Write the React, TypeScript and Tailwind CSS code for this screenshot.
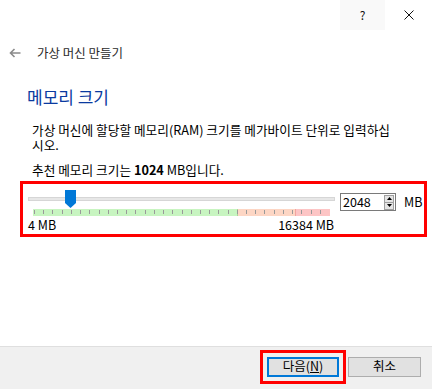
import React from "react";

const font = { fontFamily: '"Noto Sans CJK KR", "Noto Sans", sans-serif' };

function Thumb() {
  return (
    <svg width="11" height="18" viewBox="0 0 11 18" className="absolute left-[37px] top-[1px]">
      <polygon points="0,0 11,0 11,13 5.5,18 0,13" fill="#0078d7" />
    </svg>
  );
}

function TickBar() {
  const ticks = Array.from({ length: 32 });
  return (
    <div className="relative ml-[5px] flex h-[7px] w-[297px]">
      <div className="h-full w-[205px] border-r border-[#a9d59a] bg-[#c8f5c1]" />
      <div className="h-full w-[58px] border-r border-[#f2a5a0] bg-[#fdd6c4]" />
      <div className="h-full flex-1 bg-[#fdc5c5]" />
      <div className="absolute inset-0 flex justify-between pl-[1px] pr-[9px]">
        {ticks.map((_, i) => (
          <span key={i} className="mt-[1px] h-[4px] w-[1px] bg-[#9a9a9a]" />
        ))}
      </div>
    </div>
  );
}

function SpinBox() {
  return (
    <div className="ml-[5px] mt-[9px] flex h-[18px] w-[56px] items-center border border-[#7a7a7a] bg-white">
      <span className="flex-1 pl-[2px] text-[12.5px] leading-[16px] text-black">2048</span>
      <div className="mr-[1px] flex h-[15px] w-[10px] flex-col border border-[#a0a0a0] bg-[#e5e5e5]">
        <div className="flex flex-1 items-center justify-center border-b border-[#a0a0a0]">
          <svg width="5" height="3" viewBox="0 0 5 3">
            <polygon points="2.5,0 5,3 0,3" fill="#000" />
          </svg>
        </div>
        <div className="flex flex-1 items-center justify-center">
          <svg width="5" height="3" viewBox="0 0 5 3">
            <polygon points="0,0 5,0 2.5,3" fill="#000" />
          </svg>
        </div>
      </div>
    </div>
  );
}

export default function App() {
  return (
    <div className="flex h-[389px] w-[432px] flex-col bg-white text-black" style={font}>
      {/* title bar */}
      <div className="flex h-[30px] justify-end">
        <div className="flex w-[45px] items-center justify-center bg-[#f9f9f9] text-[12px] text-[#111]">?</div>
        <div className="flex w-[47px] items-center justify-center">
          <svg width="10" height="10" viewBox="0 0 10 10">
            <path d="M0.5 0.5 L9.5 9.5 M9.5 0.5 L0.5 9.5" stroke="#111" strokeWidth="1" />
          </svg>
        </div>
      </div>

      <main className="flex-1">
        <div className="mt-[14px] flex h-[18px] items-center pl-[9px]">
          <svg width="12" height="10" viewBox="0 0 12 10">
            <path d="M11.5 5 H1.5 M5.5 1 L1.5 5 L5.5 9" stroke="#8a8a8a" strokeWidth="1.6" fill="none" />
          </svg>
          <span className="ml-[16px] text-[12.5px] leading-[18px] text-[#2b2b2b]">가상 머신 만들기</span>
        </div>

        <h1 className="mt-[24px] pl-[27px] text-[17px] leading-[22px] text-[#0a3aa0]">메모리 크기</h1>

        <p className="mt-[14px] whitespace-nowrap pl-[32px] text-[12.7px] leading-[15px]">
          가상 머신에 할당할 메모리(RAM) 크기를 메가바이트 단위로 입력하십
          <br />
          시오.
        </p>
        <p className="mt-[10px] pl-[32px] text-[12.7px] leading-[15px]">
          추천 메모리 크기는 <b>1024</b> MB입니다.
        </p>

        <div className="ml-[20px] mt-[4px] flex h-[56px] w-[407px] items-start border-[3px] border-[#ff0000] pl-[5px]">
          <div className="w-[307px] pt-[5px]">
            <div className="relative h-[20px]">
              <div className="absolute left-0 right-0 top-[8px] h-[4px] border border-[#d6d6d6] bg-[#e7e7e7]" />
              <Thumb />
            </div>
            <TickBar />
            <div className="mt-[1px] flex justify-between pr-[1px] text-[12.5px] leading-[15px]">
              <span>4 MB</span>
              <span>16384 MB</span>
            </div>
          </div>
          <SpinBox />
          <span className="ml-[8px] mt-[9px] text-[12.5px] leading-[18px]">MB</span>
        </div>
      </main>

      <footer className="flex h-[43px] items-center justify-end gap-[2px] border-t border-[#dfdfdf] bg-[#f0f0f0] pb-[3px] pr-[11px]">
        <div className="border-[3px] border-[#ff0000] p-[4px]">
          <button className="flex h-[20px] w-[72px] items-center justify-center border-2 border-[#0078d7] bg-[#e1e1e1] text-[12.5px] leading-none">
            다음(<span className="underline">N</span>)
          </button>
        </div>
        <button className="flex h-[20px] w-[73px] items-center justify-center border border-[#adadad] bg-[#e1e1e1] text-[12.5px] leading-none">
          취소
        </button>
      </footer>
    </div>
  );
}
